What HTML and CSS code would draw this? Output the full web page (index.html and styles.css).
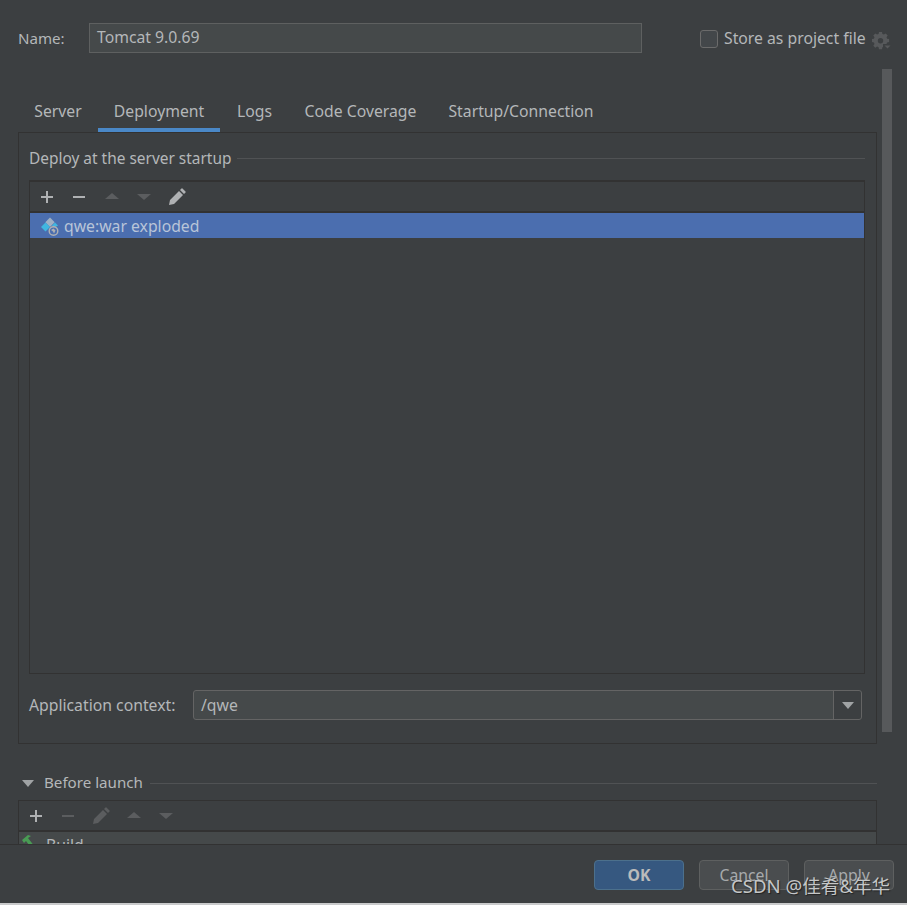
FILE: index.html
```html
<!DOCTYPE html>
<html lang="en">
<head>
<meta charset="utf-8">
<title>Run/Debug Configuration</title>
<link rel="stylesheet" href="styles.css">
</head>
<body>
<div class="dialog">
  <main class="content">
    <div class="name-row">
      <label class="name-label">Name:</label>
      <div class="name-input">Tomcat 9.0.69</div>
      <span class="checkbox"></span>
      <span class="store-label">Store as project file</span>
      <svg class="gear" width="20" height="20" viewBox="0 0 20 20"><path fill="#57595b" d="M7 1h3l.4 2 1.500.6 1.800-1.200 2 2-1.200 1.800.6 1.500 2 .4v3l-2 .4-.6 1.500 1.200 1.800-2 2-1.800-1.200-1.500.6-.4 2H7l-.4-2-1.500-.6-1.800 1.200-2-2 1.200-1.800-.6-1.500-2-.4v-3l2-.4.6-1.500L1.300 4.400l2-2 1.800 1.200 1.500-.6zM8.500 7a2.700 2.700 0 1 0 0 5.400 2.700 2.700 0 0 0 0-5.400z"/><path fill="#3c3f41" d="M11 13h9v7h-9z"/><path fill="#57595b" d="M12.500 14.500h6l-3 3z"/></svg>
    </div>

    <nav class="tabs">
      <span class="tab">Server</span>
      <span class="tab active">Deployment</span>
      <span class="tab">Logs</span>
      <span class="tab">Code Coverage</span>
      <span class="tab">Startup/Connection</span>
    </nav>

    <section class="panel">
      <div class="group-title">
        <span>Deploy at the server startup</span>
        <i class="rule"></i>
      </div>
      <div class="list-box">
        <div class="toolbar">
          <svg class="tool" width="16" height="16" viewBox="0 0 16 16"><path fill="#afb1b3" d="M7 2h2v5h5v2H9v5H7V9H2V7h5z"/></svg>
          <svg class="tool" width="16" height="16" viewBox="0 0 16 16"><path fill="#afb1b3" d="M2 7h12v2H2z"/></svg>
          <svg class="tool nudge" width="16" height="16" viewBox="0 0 16 16"><path fill="#5b5d5f" d="M8 4l7 6H1z"/></svg>
          <svg class="tool" width="16" height="16" viewBox="0 0 16 16"><path fill="#5b5d5f" d="M1 5h14l-7 6z"/></svg>
          <svg class="tool" width="18" height="18" viewBox="0 0 18 18"><path fill="#afb1b3" d="M1 17l1-5 9-9 4 4-9 9zM12 2l1.500-1.500q.5-.5 1 0l3 3q.5.5 0 1L16 6z"/></svg>
        </div>
        <div class="list-body">
          <div class="list-row">
            <svg class="artifact" width="20" height="20" viewBox="0 0 20 20">
              <path fill="#9fb0c4" d="M10 1.500l4.700 4.700L10 11 5.300 6.200z"/>
              <path fill="#40b6e0" d="M5.500 6.500L10 11l-4.500 4.500L1 11z"/>
              <path fill="#40b6e0" d="M15 6.500l3 3-1.500 1h-3.500l-1-1z"/>
              <circle cx="13.500" cy="15" r="4.300" fill="#4b6eaf" stroke="#afb1b3" stroke-width="1.400"/>
              <path fill="#afb1b3" d="M11 14l2.500-1.500 2 2-1.500 3-1-2z"/>
            </svg>
            <span>qwe:war exploded</span>
          </div>
        </div>
      </div>
      <div class="context-row">
        <span class="context-label">Application context:</span>
        <div class="combo">
          <span class="combo-text">/qwe</span>
          <span class="combo-btn"><i class="caret"></i></span>
        </div>
      </div>
    </section>

    <div class="launch-title">
      <i class="caret launch-caret"></i>
      <span class="launch-text">Before launch</span>
      <i class="rule"></i>
    </div>
    <div class="launch-box">
      <div class="toolbar">
        <svg class="tool" width="16" height="16" viewBox="0 0 16 16"><path fill="#afb1b3" d="M7 2h2v5h5v2H9v5H7V9H2V7h5z"/></svg>
        <svg class="tool" width="16" height="16" viewBox="0 0 16 16"><path fill="#5b5d5f" d="M2 7h12v2H2z"/></svg>
        <svg class="tool" width="18" height="18" viewBox="0 0 18 18"><path fill="#5b5d5f" d="M1 17l1-5 9-9 4 4-9 9zM12 2l1.500-1.500q.5-.5 1 0l3 3q.5.5 0 1L16 6z"/></svg>
        <svg class="tool" width="16" height="16" viewBox="0 0 16 16"><path fill="#5b5d5f" d="M8 4l7 6H1z"/></svg>
        <svg class="tool" width="16" height="16" viewBox="0 0 16 16"><path fill="#5b5d5f" d="M1 5h14l-7 6z"/></svg>
      </div>
      <div class="launch-row">
        <svg class="hammer" width="16" height="16" viewBox="0 0 16 16"><path fill="#499c54" d="M1 5l6-5 3 1-3 2 7 9-3 2-6-8-2 2z"/></svg>
        <span>Build</span>
      </div>
    </div>
    <div class="scrollbar"></div>
  </main>

  <footer class="footer">
    <button class="btn primary">OK</button>
    <button class="btn">Cancel</button>
    <button class="btn">Apply</button>
    <span class="watermark">CSDN @佳肴&amp;年华</span>
  </footer>
</div>
</body>
</html>
```

FILE: styles.css
```css
* { box-sizing: border-box; }
html, body { margin: 0; padding: 0; }
body {
  width: 907px;
  height: 905px;
  overflow: hidden;
  background: #c9cacb;
  font-family: "Noto Sans", "Noto Sans CJK SC", sans-serif;
  font-size: 15.75px;
  color: #b4b7b9;
}
.dialog {
  height: 903px;
  background: #3c3f41;
  display: flex;
  flex-direction: column;
}
.content {
  position: relative;
  height: 844px;
  flex: none;
  overflow: hidden;
  padding: 23px 30px 0 18px;
}
.name-row {
  display: flex;
  align-items: center;
  height: 30px;
  width: 880px;
}
.name-label { flex: none; width: 71px; font-size: 15.1px; }
.name-input {
  flex: none;
  width: 553px;
  height: 30px;
  padding-left: 7px;
  line-height: 27px;
  background: #45494a;
  border: 1px solid #5e6060;
}
.checkbox {
  flex: none;
  width: 18px;
  height: 18px;
  margin: 2px 0 0 58px;
  background: #43474a;
  border: 1px solid #6b6b6b;
  border-radius: 3px;
}
.store-label { flex: none; margin-left: 6px; line-height: 30px; white-space: nowrap; }
.gear { margin: 5px 0 0 6px; flex: none; }

.tabs {
  display: flex;
  height: 38px;
  margin-top: 41px;
}
.tab {
  flex: none;
  height: 38px;
  line-height: 35px;
  text-align: center;
  white-space: nowrap;
}
.tab:nth-child(1) { width: 80px; }
.tab:nth-child(2) { width: 122px; }
.tab:nth-child(3) { width: 67px; margin-left: 1px; }
.tab:nth-child(4) { width: 145px; }
.tab:nth-child(5) { width: 176px; }
.tab.active { border-bottom: 4px solid #4a88c7; }

.panel {
  height: 612px;
  padding: 13px 11px 0 10px;
  border: 1px solid #323232;
}
.group-title {
  display: flex;
  align-items: center;
  gap: 6px;
  height: 24px;
  font-size: 15.45px;
}
.group-title span { line-height: 24px; }
.rule {
  flex: 1;
  height: 1px;
  background: #505254;
}
.list-box {
  height: 494px;
  margin-top: 10px;
  border: 1px solid #323232;
  border-top-width: 2px;
  display: flex;
  flex-direction: column;
}
.toolbar {
  display: flex;
  align-items: center;
  height: 31px;
  padding-left: 9px;
  gap: 16px;
  border-bottom: 2px solid #323232;
  flex: none;
}
.tool { flex: none; }
.nudge { margin-left: 1px; }
.list-body { flex: 1; }
.list-row {
  display: flex;
  align-items: center;
  height: 25px;
  background: #4b6eaf;
  color: #b9c5d8;
  padding-left: 10px;
  gap: 4px;
}
.context-row {
  display: flex;
  align-items: center;
  height: 30px;
  margin-top: 16px;
}
.context-label { width: 164px; }
.combo {
  display: flex;
  width: 669px;
  height: 30px;
  background: #45494a;
  border: 1px solid #646464;
  border-radius: 3px;
}
.combo-text {
  flex: 1;
  padding-left: 7px;
  line-height: 28px;
}
.combo-btn {
  width: 28px;
  background: #3c3f41;
  border-left: 1px solid #646464;
  border-radius: 0 3px 3px 0;
  display: flex;
  align-items: center;
  justify-content: center;
}
.caret {
  width: 0;
  height: 0;
  border-left: 6px solid transparent;
  border-right: 6px solid transparent;
  border-top: 7px solid #a0a3a5;
}
.launch-title {
  display: flex;
  align-items: center;
  height: 24px;
  margin-top: 27px;
}
.launch-caret { margin: 0 10px 0 4px; }
.launch-text { font-size: 15.15px; line-height: 22px; margin-bottom: 2px; }
.launch-title .rule { margin-left: 7px; }
.launch-box {
  margin-top: 5px;
  border: 1px solid #323232;
  border-bottom: 0;
}
.launch-row {
  display: flex;
  align-items: center;
  height: 26px;
  background: #45494a;
  gap: 9px;
  padding-left: 2px;
}
.hammer { margin-bottom: 4px; }
.scrollbar {
  position: absolute;
  left: 882px;
  top: 69px;
  width: 10px;
  height: 663px;
  background: #57595b;
}

.footer {
  position: relative;
  flex: 1;
  display: flex;
  justify-content: flex-end;
  gap: 15px;
  padding: 15px 13px 0 0;
  border-top: 1px solid #323232;
}
.btn {
  width: 90px;
  height: 30px;
  font: inherit;
  color: #a7aaac;
  background: #4a4d4f;
  border: 1px solid #5e6060;
  border-radius: 4px;
  padding: 0;
}
.btn.primary {
  background: #365880;
  border-color: #4c708c;
  color: #bbbbbb;
  font-weight: 700;
}
.watermark {
  position: absolute;
  left: 731px;
  top: 29px;
  font-size: 18.6px;
  line-height: 24px;
  color: #c4c6c7;
  text-shadow: 1px 1px 1px #222;
  white-space: nowrap;
}
```
